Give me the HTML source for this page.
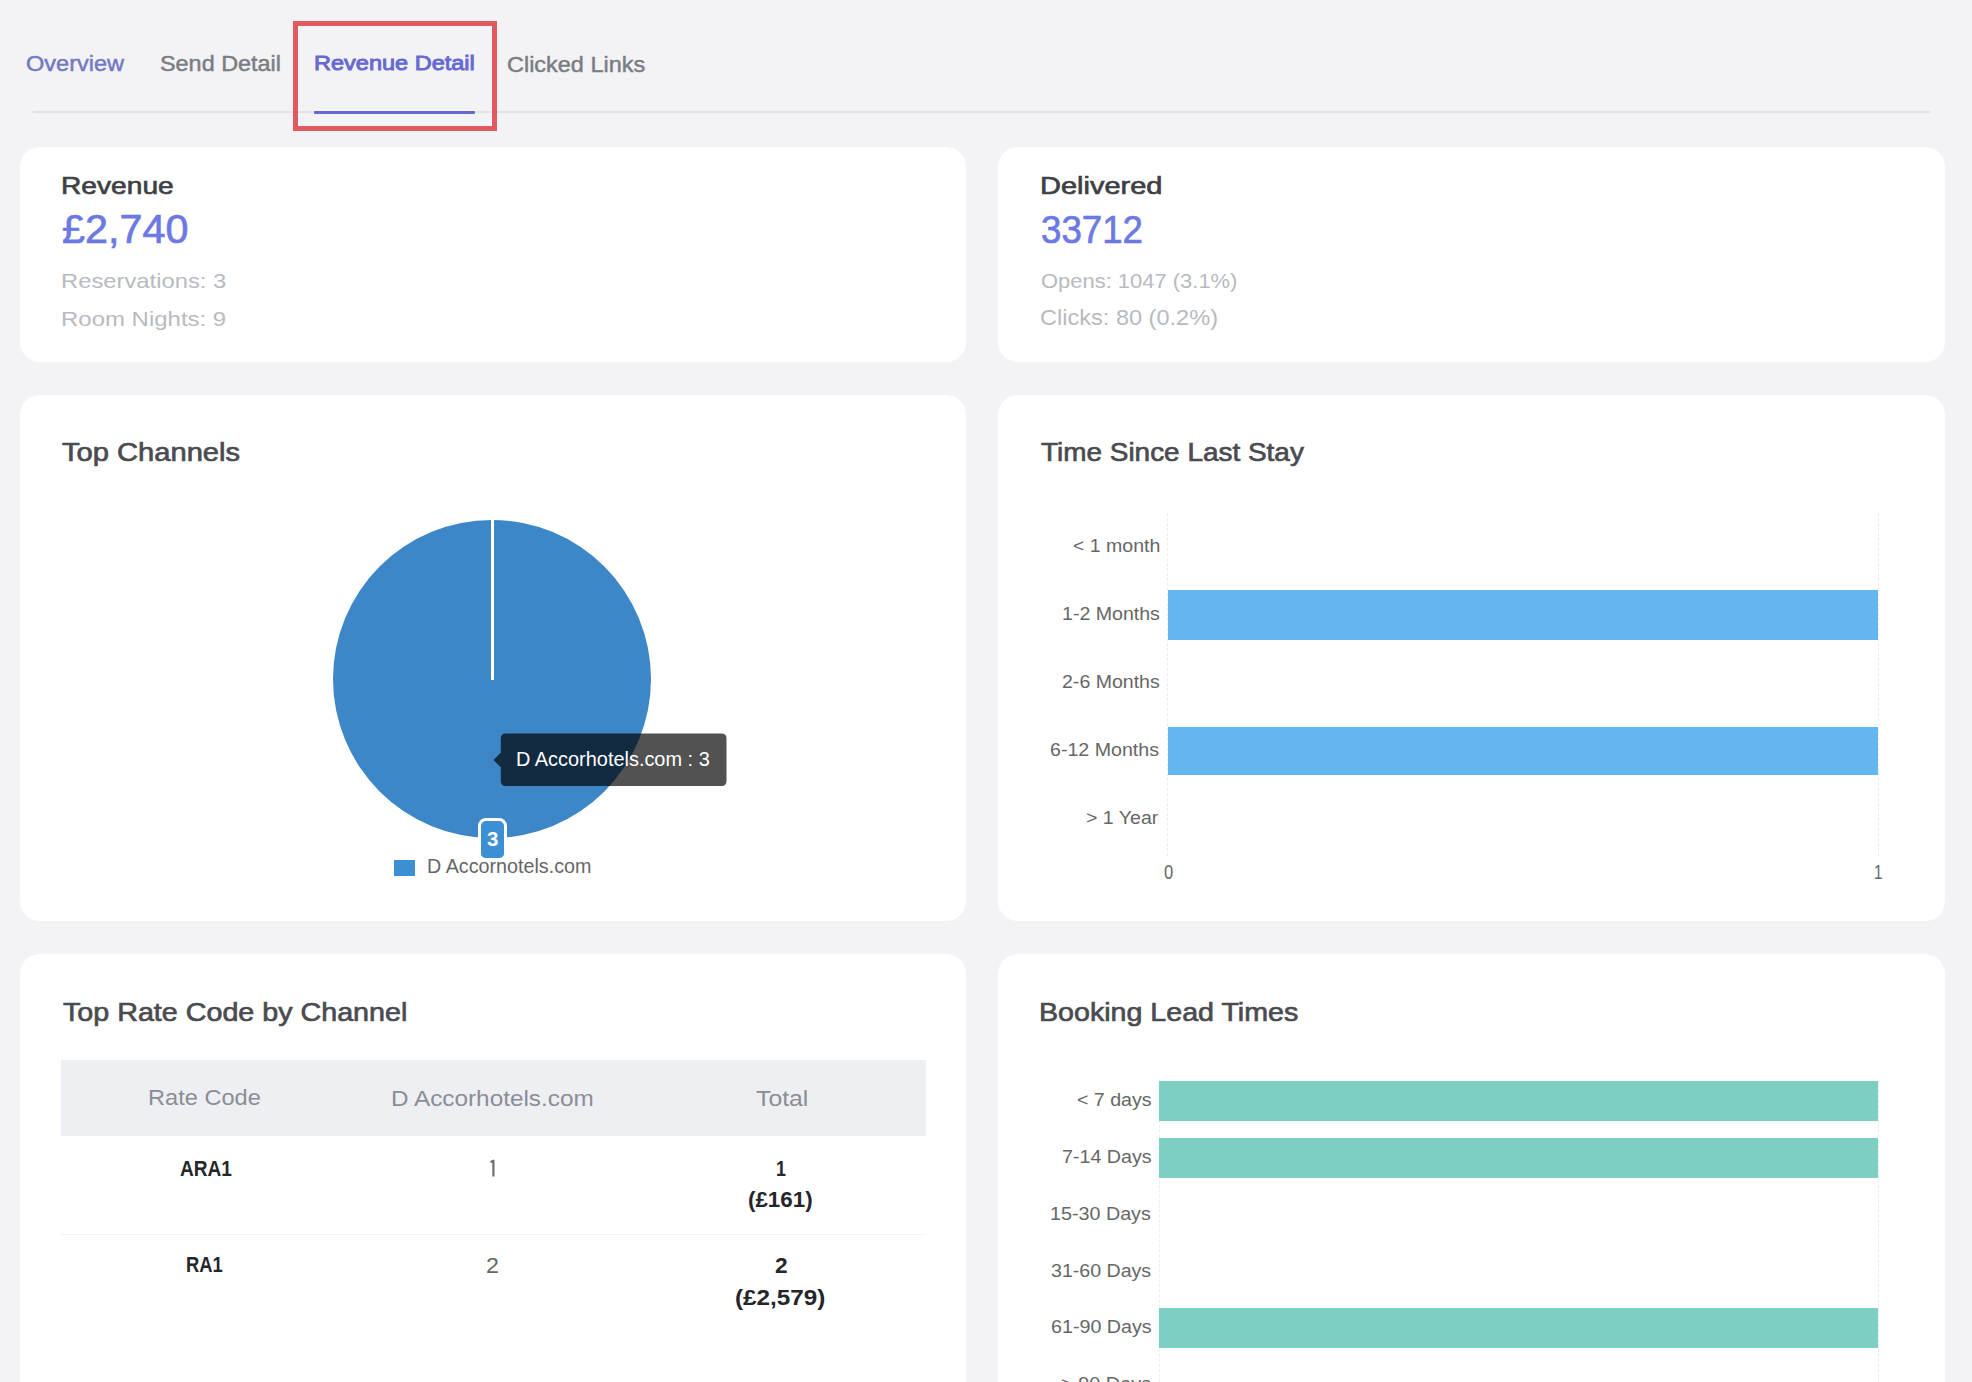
<!DOCTYPE html>
<html>
<head>
<meta charset="utf-8">
<style>
html,body{margin:0;padding:0;}
body{width:1972px;height:1382px;overflow:hidden;background:#f3f3f5;position:relative;font-family:"Liberation Sans",sans-serif;}
.a{position:absolute;}
.t{position:absolute;white-space:nowrap;line-height:normal;transform-origin:0 0;}
.card{position:absolute;background:#ffffff;border-radius:20px;}
.tabline{position:absolute;left:33px;top:111.3px;width:1897px;height:2.2px;background:#e2e3e6;}
.tabul{position:absolute;left:314px;top:111.2px;width:161px;height:2.4px;background:#6669d2;border-radius:1px;}
.redbox{position:absolute;left:293px;top:21px;width:194px;height:100px;border:5px solid #e05a5e;}
.pie{position:absolute;left:333.4px;top:520.3px;width:318px;height:318px;border-radius:50%;background:#3d87c9;}
.pieline{position:absolute;left:490.6px;top:519px;width:3.6px;height:160.5px;background:#ffffff;}
.tip{position:absolute;left:500.8px;top:733.6px;width:225.7px;height:52.3px;border-radius:5px;background:rgba(0,0,0,0.68);}
.tiparrow{position:absolute;left:493.3px;top:752.2px;width:0;height:0;border-top:7px solid transparent;border-bottom:7px solid transparent;border-right:7.5px solid rgba(0,0,0,0.68);}
.legsq{position:absolute;left:393.9px;top:860.2px;width:21.2px;height:16.2px;background:#3d8fd4;}
.dlabel{position:absolute;left:477.6px;top:818.4px;width:23.6px;height:37px;border:3px solid #fff;border-bottom-width:4px;border-radius:8px;background:#3d8fd4;}
.grid{position:absolute;width:0;border-left:1px dashed #ededed;}
.bar1{position:absolute;background:#63b6ef;}
.bar2{position:absolute;background:#7dcfc4;}
.thead{position:absolute;left:61px;top:1060px;width:865px;height:76px;background:#eeeff3;}
.rowline{position:absolute;left:61px;top:1233.5px;width:865px;height:1px;background:#f3f3f5;}
</style>
</head>
<body>
<div class="tabline"></div>
<div class="tabul"></div>
<div class="redbox"></div>

<div class="card" style="left:20px;top:146.5px;width:946px;height:215.5px;"></div>
<div class="card" style="left:998px;top:146.5px;width:947px;height:215.5px;"></div>
<div class="card" style="left:20px;top:395px;width:946px;height:525.5px;"></div>
<div class="card" style="left:998px;top:395px;width:947px;height:525.5px;"></div>
<div class="card" style="left:20px;top:954px;width:946px;height:520px;"></div>
<div class="card" style="left:998px;top:954px;width:947px;height:520px;"></div>

<div class="pie"></div>
<div class="pieline"></div>

<div class="grid" style="left:1167px;top:513px;height:343px;"></div>
<div class="grid" style="left:1878px;top:513px;height:343px;"></div>
<div class="bar1" style="left:1167.6px;top:590.4px;width:710.8px;height:49.2px;"></div>
<div class="bar1" style="left:1167.6px;top:726.6px;width:710.8px;height:48.2px;"></div>

<div class="grid" style="left:1159px;top:1080px;height:302px;"></div>
<div class="grid" style="left:1878px;top:1080px;height:302px;"></div>
<div class="bar2" style="left:1159.4px;top:1080.5px;width:718.8px;height:40.2px;"></div>
<div class="bar2" style="left:1159.4px;top:1138.2px;width:718.8px;height:39.8px;"></div>
<div class="bar2" style="left:1159.4px;top:1308.3px;width:718.8px;height:39.7px;"></div>

<div class="thead"></div>
<div class="rowline"></div>

<div class="legsq"></div>
<div class="t" style="left:25.94px;top:52.13px;font-size:21.15px;color:#7278c4;font-weight:400;transform:scaleX(1.1134);-webkit-text-stroke:0.45px #7278c4">Overview</div>
<div class="t" style="left:160.15px;top:52.13px;font-size:21.15px;color:#7b7d84;font-weight:400;transform:scaleX(1.1068);-webkit-text-stroke:0.45px #7b7d84">Send Detail</div>
<div class="t" style="left:314.08px;top:50.93px;font-size:20.79px;color:#6669d2;font-weight:400;transform:scaleX(1.1318);-webkit-text-stroke:0.9px #6669d2">Revenue Detail</div>
<div class="t" style="left:507.34px;top:52.53px;font-size:21.15px;color:#7b7d84;font-weight:400;transform:scaleX(1.1092);-webkit-text-stroke:0.45px #7b7d84">Clicked Links</div>
<div class="t" style="left:60.91px;top:172.39px;font-size:24.06px;color:#3e3f44;font-weight:400;transform:scaleX(1.1713);-webkit-text-stroke:0.65px #3e3f44">Revenue</div>
<div class="t" style="left:61.63px;top:207.03px;font-size:40.12px;color:#6d79e3;font-weight:400;transform:scaleX(1.0300);-webkit-text-stroke:0.7px #6d79e3">£2,740</div>
<div class="t" style="left:60.55px;top:268.72px;font-size:20.64px;color:#b8babf;font-weight:400;transform:scaleX(1.1535);">Reservations: 3</div>
<div class="t" style="left:60.55px;top:306.55px;font-size:20.93px;color:#b8babf;font-weight:400;transform:scaleX(1.1456);">Room Nights: 9</div>
<div class="t" style="left:1040.49px;top:172.39px;font-size:24.06px;color:#3e3f44;font-weight:400;transform:scaleX(1.2058);-webkit-text-stroke:0.65px #3e3f44">Delivered</div>
<div class="t" style="left:1040.70px;top:207.43px;font-size:39.68px;color:#6d79e3;font-weight:400;transform:scaleX(0.9242);-webkit-text-stroke:0.7px #6d79e3">33712</div>
<div class="t" style="left:1041.30px;top:269.05px;font-size:20.93px;color:#b8babf;font-weight:400;transform:scaleX(1.0490);">Opens: 1047 (3.1%)</div>
<div class="t" style="left:1040.19px;top:305.79px;font-size:21.22px;color:#b8babf;font-weight:400;transform:scaleX(1.1099);">Clicks: 80 (0.2%)</div>
<div class="t" style="left:62.08px;top:438.11px;font-size:24.93px;color:#4a4b50;font-weight:400;transform:scaleX(1.1685);-webkit-text-stroke:0.65px #4a4b50">Top Channels</div>
<div class="t" style="left:1040.96px;top:438.44px;font-size:25.22px;color:#4a4b50;font-weight:400;transform:scaleX(1.1075);-webkit-text-stroke:0.65px #4a4b50">Time Since Last Stay</div>
<div class="t" style="left:62.57px;top:997.98px;font-size:25.07px;color:#4a4b50;font-weight:400;transform:scaleX(1.1442);-webkit-text-stroke:0.65px #4a4b50">Top Rate Code by Channel</div>
<div class="t" style="left:1039.10px;top:998.44px;font-size:25.22px;color:#4a4b50;font-weight:400;transform:scaleX(1.1343);-webkit-text-stroke:0.65px #4a4b50">Booking Lead Times</div>
<div class="t" style="left:1072.70px;top:536.35px;font-size:18.17px;color:#666666;font-weight:400;transform:scaleX(1.0742);">&lt; 1 month</div>
<div class="t" style="left:1061.56px;top:603.39px;font-size:18.9px;color:#666666;font-weight:400;transform:scaleX(1.0360);">1-2 Months</div>
<div class="t" style="left:1061.50px;top:671.09px;font-size:18.9px;color:#666666;font-weight:400;transform:scaleX(1.0345);">2-6 Months</div>
<div class="t" style="left:1050.30px;top:739.29px;font-size:18.9px;color:#666666;font-weight:400;transform:scaleX(1.0377);">6-12 Months</div>
<div class="t" style="left:1086.40px;top:807.39px;font-size:18.9px;color:#666666;font-weight:400;transform:scaleX(1.0356);">&gt; 1 Year</div>
<div class="t" style="left:1163.50px;top:860.94px;font-size:19.62px;color:#666666;font-weight:400;transform:scaleX(0.8455);">0</div>
<div class="t" style="left:1873.75px;top:861.08px;font-size:20.35px;color:#666666;font-weight:400;transform:scaleX(0.7500);">1</div>
<div class="t" style="left:1076.60px;top:1089.49px;font-size:18.9px;color:#666666;font-weight:400;transform:scaleX(1.0365);">&lt; 7 days</div>
<div class="t" style="left:1061.50px;top:1145.89px;font-size:18.9px;color:#666666;font-weight:400;transform:scaleX(1.0414);">7-14 Days</div>
<div class="t" style="left:1050.36px;top:1202.89px;font-size:18.9px;color:#666666;font-weight:400;transform:scaleX(1.0435);">15-30 Days</div>
<div class="t" style="left:1051.00px;top:1259.89px;font-size:18.9px;color:#666666;font-weight:400;transform:scaleX(1.0368);">31-60 Days</div>
<div class="t" style="left:1050.50px;top:1316.39px;font-size:18.9px;color:#666666;font-weight:400;transform:scaleX(1.0420);">61-90 Days</div>
<div class="t" style="left:1061.00px;top:1373.39px;font-size:18.9px;color:#666666;font-weight:400;transform:scaleX(1.0536);">&gt; 90 Days</div>
<svg class="a" style="left:490px;top:730px" width="240" height="60" viewBox="490 730 240 60"><path d="M505.8 733.6 H721.5 Q726.5 733.6 726.5 738.6 V780.9 Q726.5 785.9 721.5 785.9 H505.8 Q500.8 785.9 500.8 780.9 V767.3 L493.4 760 L500.8 752.7 V738.6 Q500.8 733.6 505.8 733.6 Z" fill="rgba(0,0,0,0.68)"/></svg>
<div class="t" style="left:516.33px;top:747.12px;font-size:20.64px;color:#ffffff;font-weight:400;transform:scaleX(0.9657);">D Accorhotels.com : 3</div>
<div class="t" style="left:427.32px;top:854.71px;font-size:20.2px;color:#666666;font-weight:400;transform:scaleX(0.9768);">D Accorhotels.com</div>
<div class="dlabel"></div>
<div class="t" style="left:487.00px;top:826.92px;font-size:21.08px;color:#ffffff;font-weight:700;transform:scaleX(0.9727);">3</div>
<div class="t" style="left:148.40px;top:1086.15px;font-size:21.37px;color:#8b8d96;font-weight:400;transform:scaleX(1.1044);">Rate Code</div>
<div class="t" style="left:390.88px;top:1085.77px;font-size:21.8px;color:#8b8d96;font-weight:400;transform:scaleX(1.1153);">D Accorhotels.com</div>
<div class="t" style="left:755.50px;top:1085.77px;font-size:21.8px;color:#8b8d96;font-weight:400;transform:scaleX(1.1372);">Total</div>
<div class="t" style="left:179.50px;top:1156.65px;font-size:21.37px;color:#25262a;font-weight:700;transform:scaleX(0.8923);">ARA1</div>
<svg class="a" style="left:486px;top:1156px" width="14" height="24"><path d="M4.6 6.2 L7.4 4.6 V20.4" stroke="#6f6f6f" stroke-width="2.2" fill="none" stroke-linejoin="round"/></svg>
<div class="t" style="left:775.68px;top:1155.87px;font-size:21.8px;color:#25262a;font-weight:700;transform:scaleX(0.8182);">1</div>
<div class="t" style="left:747.97px;top:1186.77px;font-size:21.8px;color:#25262a;font-weight:700;transform:scaleX(1.0251);">(£161)</div>
<div class="t" style="left:186.14px;top:1253.35px;font-size:21.37px;color:#25262a;font-weight:700;transform:scaleX(0.8602);">RA1</div>
<div class="t" style="left:486.37px;top:1252.48px;font-size:22.67px;color:#666666;font-weight:400;transform:scaleX(1.0273);">2</div>
<div class="t" style="left:775.00px;top:1252.48px;font-size:22.67px;color:#25262a;font-weight:700;transform:scaleX(1.0000);">2</div>
<div class="t" style="left:735.29px;top:1284.77px;font-size:21.8px;color:#25262a;font-weight:700;transform:scaleX(1.1123);">(£2,579)</div>
</body>
</html>
